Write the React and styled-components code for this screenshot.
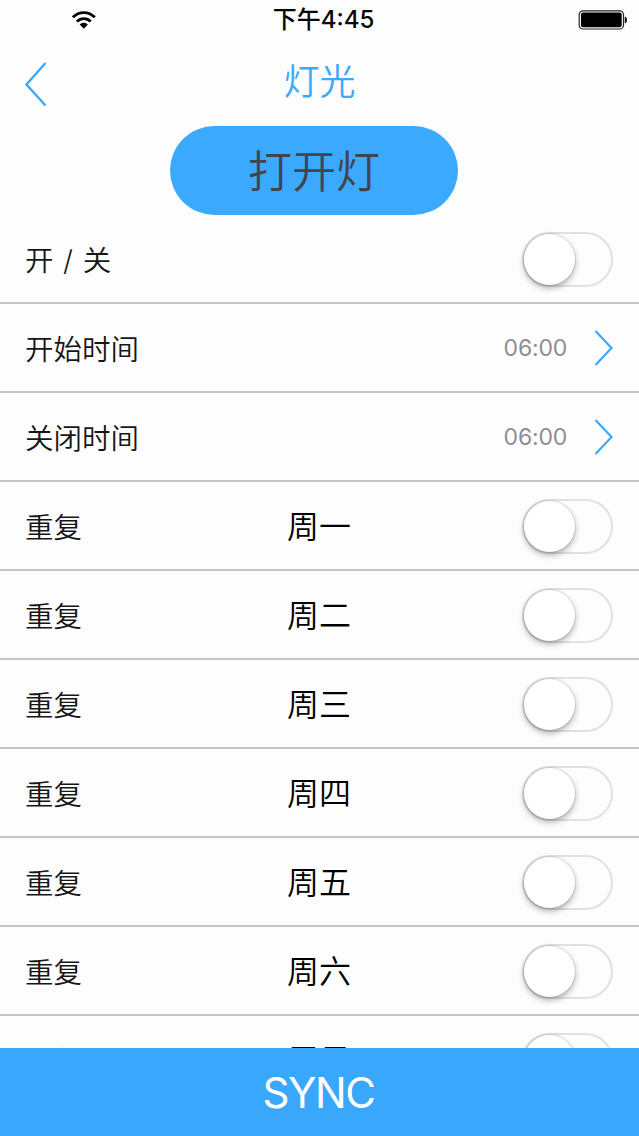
import React, { useState } from "react";
import styled, { createGlobalStyle } from "styled-components";

const GlobalStyle = createGlobalStyle`
  * {
    box-sizing: border-box;
  }

  body {
    margin: 0;
    background-color: #fefdfe;
    font-family: Inter, "Noto Sans CJK SC", sans-serif;
  }
`;

const Screen = styled.div`
  display: flex;
  flex-direction: column;
  width: 639px;
  height: 1136px;
  overflow: hidden;
`;

const StatusBar = styled.div`
  display: grid;
  grid-template-columns: 1fr auto 1fr;
  align-items: center;
  height: 40px;
  padding: 0 11px 0 71px;
`;

const Clock = styled.span`
  margin-right: 52px;
  font-size: 24px;
  font-weight: 550;
  line-height: 40px;
  white-space: nowrap;
  color: #050505;
`;

const ClockPeriod = styled.span`
  font-weight: 500;
`;

const BatteryIcon = styled.svg`
  justify-self: end;
`;

const Header = styled.header`
  display: grid;
  grid-template-columns: 72px 1fr 72px;
  height: 86px;
`;

const BackButton = styled.button`
  display: flex;
  padding: 22px 0 0 23px;
  border: none;
  background: none;
  cursor: pointer;
`;

const Title = styled.h1`
  margin: 0;
  padding-top: 2px;
  font-size: 36px;
  font-weight: 350;
  line-height: 80px;
  text-align: center;
  color: #3aa9ff;
`;

const LightButton = styled.button`
  flex-shrink: 0;
  align-self: center;
  width: 288px;
  height: 89px;
  margin-right: 11px;
  padding: 0 0 3px;
  border: none;
  border-radius: 45px;
  background-color: #3ba9fe;
  font-family: inherit;
  font-size: 44px;
  font-weight: 350;
  color: #40454c;
  cursor: pointer;
`;

const List = styled.div`
  flex: 1;
  min-height: 0;
  overflow: hidden;
`;

const Row = styled.div`
  display: grid;
  grid-template-columns: 1fr auto 1fr;
  align-items: center;
  height: 89px;
  padding: 2px 26px 0 25px;
  border-bottom: 2px solid #c7c6cb;
`;

const Label = styled.span`
  padding-top: 2px;
  font-size: 28.5px;
  font-weight: 350;
  line-height: 40px;
  word-spacing: 1.6px;
  white-space: pre;
  color: #161616;
`;

const Day = styled.span`
  padding-top: 1px;
  font-size: 32px;
  font-weight: 350;
  line-height: 40px;
  color: #000;
`;

const RowEnd = styled.div`
  grid-column: 3;
  display: flex;
  align-items: center;
  justify-content: flex-end;
  gap: 27px;
`;

const TimeValue = styled(RowEnd)`
  padding-bottom: 2px;
`;

const Time = styled.span`
  font-size: 23px;
  font-weight: 380;
  letter-spacing: -0.2px;
  color: #8e8e93;
`;

const Switch = styled.button`
  display: flex;
  width: 91px;
  height: 55px;
  padding: 0;
  border: 2px solid #e1e0e2;
  border-radius: 28px;
  background-color: ${({ $on }) => ($on ? "#3aa9ff" : "#fefdfe")};
  justify-content: ${({ $on }) => ($on ? "flex-end" : "flex-start")};
  cursor: pointer;
`;

const Knob = styled.span`
  width: 51px;
  height: 51px;
  border-radius: 50%;
  background-color: #fff;
  box-shadow: 0 0 0 1px rgba(0, 0, 0, 0.08), 0 3px 6px rgba(0, 0, 0, 0.32);
`;

const SyncButton = styled.button`
  flex-shrink: 0;
  height: 88px;
  padding: 0 2px 0 0;
  border: none;
  background-color: #39a7fc;
  font-family: inherit;
  font-size: 42px;
  font-weight: 380;
  letter-spacing: -1.5px;
  color: #fff;
  cursor: pointer;
`;

const WifiIcon = () => (
  <svg width="26" height="20" viewBox="0 0 26 20" fill="none">
    <path d="M1.8 7.3C8 1 17.6 1 23.8 7.3" stroke="#050505" strokeWidth="2.9" />
    <path d="M5.9 11.6C9.8 7.6 15.8 7.6 19.7 11.6" stroke="#050505" strokeWidth="2.9" />
    <path d="M8.7 14.5C11.1 12.3 14.5 12.3 16.9 14.5L12.8 18.7Z" fill="#050505" />
  </svg>
);

const Battery = () => (
  <BatteryIcon width="50" height="20" viewBox="0 0 50 20">
    <rect x="1.2" y="0.8" width="44.3" height="18.2" rx="3.8" fill="#fff" stroke="#222" strokeWidth="1.2" />
    <rect x="3" y="2.5" width="40.7" height="14.8" rx="2" fill="#000" />
    <path d="M46.8 6.7H47.4Q49 6.9 49 10Q49 13.1 47.4 13.3H46.8Z" fill="#111" />
  </BatteryIcon>
);

const BackIcon = () => (
  <svg width="24" height="46" viewBox="0 0 24 46" fill="none">
    <path d="M22.5 1L3.5 22.5L22.5 43.5" stroke="#3aa9ff" strokeWidth="2.4" />
  </svg>
);

const ChevronIcon = () => (
  <svg width="19" height="36" viewBox="0 0 19 36" fill="none">
    <path d="M1.5 1L17.5 18L1.5 35" stroke="#3aa9ff" strokeWidth="2.2" />
  </svg>
);

const days = ["周一", "周二", "周三", "周四", "周五", "周六", "周日"];

const Toggle = () => {
  const [on, setOn] = useState(false);
  return (
    <Switch type="button" role="switch" aria-checked={on} $on={on} onClick={() => setOn(!on)}>
      <Knob />
    </Switch>
  );
};

const TimeRow = ({ label, time }) => (
  <Row>
    <Label>{label}</Label>
    <TimeValue>
      <Time>{time}</Time>
      <ChevronIcon />
    </TimeValue>
  </Row>
);

const App = () => {
  return (
    <Screen>
      <GlobalStyle />
      <StatusBar>
        <WifiIcon />
        <Clock><ClockPeriod>下午</ClockPeriod>4:45</Clock>
        <Battery />
      </StatusBar>
      <Header>
        <BackButton type="button" aria-label="返回">
          <BackIcon />
        </BackButton>
        <Title>灯光</Title>
      </Header>
      <LightButton type="button">打开灯</LightButton>
      <List>
        <Row>
          <Label>开 / 关</Label>
          <RowEnd>
            <Toggle />
          </RowEnd>
        </Row>
        <TimeRow label="开始时间" time="06:00" />
        <TimeRow label="关闭时间" time="06:00" />
        {days.map((day) => (
          <Row key={day}>
            <Label>重复</Label>
            <Day>{day}</Day>
            <RowEnd>
              <Toggle />
            </RowEnd>
          </Row>
        ))}
      </List>
      <SyncButton type="button">SYNC</SyncButton>
    </Screen>
  );
};

export default App;
